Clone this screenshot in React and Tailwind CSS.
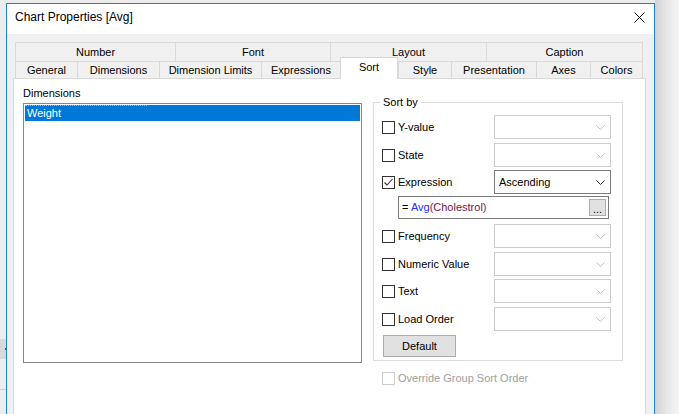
import React from 'react';

const topTabs = [
  { label: 'Number', w: 'w-[160px]' },
  { label: 'Font', w: 'w-[155px]' },
  { label: 'Layout', w: 'w-[156px]' },
  { label: 'Caption', w: 'w-[157px]' },
];

const bottomTabs = [
  { label: 'General', w: 'w-[62px]' },
  { label: 'Dimensions', w: 'w-[82px]' },
  { label: 'Dimension Limits', w: 'w-[102px]' },
  { label: 'Expressions', w: 'w-[79px]' },
  { label: 'Sort', w: 'w-[58px]', active: true },
  { label: 'Style', w: 'w-[53px]' },
  { label: 'Presentation', w: 'w-[85px]' },
  { label: 'Axes', w: 'w-[54px]' },
  { label: 'Colors', w: 'w-[53px]' },
];

function Chevron({ color }) {
  return (
    <svg width="9" height="5" viewBox="0 0 9 5">
      <polyline points="0.5,0.5 4.5,4.5 8.5,0.5" fill="none" stroke={color} strokeWidth="1" />
    </svg>
  );
}

function Dropdown({ value, enabled }) {
  return (
    <div
      className={`w-[117px] h-[24px] bg-white border flex items-center justify-between pl-[4px] pr-[5px] ${
        enabled ? 'border-[#7a7a7a]' : 'border-[#cccccc]'
      }`}
    >
      <span className="text-black">{value}</span>
      <Chevron color={enabled ? '#333333' : '#bfbfbf'} />
    </div>
  );
}

function CheckBox({ checked, disabled }) {
  return (
    <div
      className={`w-[13px] h-[13px] border bg-white flex items-center justify-center ${
        disabled ? 'border-[#cccccc]' : 'border-[#333333]'
      }`}
    >
      {checked && (
        <svg width="11" height="11" viewBox="0 0 11 11">
          <polyline points="1.5,5.5 4,8 9.5,2" fill="none" stroke="#333333" strokeWidth="1.1" />
        </svg>
      )}
    </div>
  );
}

function SortRow({ label, checked, value, enabled, className = '' }) {
  return (
    <div className={`h-[24px] flex items-center justify-between ${className}`}>
      <div className="flex items-center">
        <CheckBox checked={checked} />
        <span className="ml-[3px]">{label}</span>
      </div>
      <Dropdown value={value} enabled={enabled} />
    </div>
  );
}

export default function App() {
  return (
    <div className="w-[679px] h-[414px] overflow-hidden flex bg-[#ececec] text-[11px] leading-[13px] text-black font-['Liberation_Sans',Arial,sans-serif]">
      {/* Desktop behind, left edge */}
      <div className="w-[6px] flex flex-col">
        <div className="h-[339px]"></div>
        <div className="h-[20px] bg-[#d8d8d8] flex items-center justify-end">
          <div className="w-[1px] h-[2px] bg-[#555]"></div>
        </div>
        <div className="h-[30px]"></div>
        <div className="h-px bg-[#cfcfcf]"></div>
      </div>

      {/* Dialog window */}
      <div className="mt-[3px] w-[649px] border-t border-x border-[#1883d7] flex flex-col bg-[#f0f0f0]">
        {/* Title bar */}
        <div className="h-[30px] bg-white flex items-center justify-between pl-[8px] pr-[9px] pb-[3px]">
          <span className="text-[12px]">Chart Properties [Avg]</span>
          <svg width="11" height="11" viewBox="0 0 11 11">
            <line x1="0.5" y1="0.5" x2="10.5" y2="10.5" stroke="#111" strokeWidth="1" />
            <line x1="10.5" y1="0.5" x2="0.5" y2="10.5" stroke="#111" strokeWidth="1" />
          </svg>
        </div>

        {/* Body */}
        <div className="flex-1 flex flex-col pt-[8px] pl-[6px]">
          {/* Tabs */}
          <div className="ml-[2px] w-[628px] flex h-[19px]">
            {topTabs.map((t, i) => (
              <div
                key={t.label}
                className={`${t.w} border-t border-l border-[#d9d9d9] flex items-center justify-center ${
                  i === topTabs.length - 1 ? 'border-r' : ''
                }`}
              >
                {t.label}
              </div>
            ))}
          </div>
          <div className="ml-[2px] w-[628px] flex items-end h-[17px]">
            {bottomTabs.map((t, i) =>
              t.active ? (
                <div
                  key={t.label}
                  className={`${t.w} relative z-10 h-[22px] -mb-px bg-white border-t border-x border-[#d9d9d9] flex justify-center pt-[3px]`}
                >
                  {t.label}
                </div>
              ) : (
                <div
                  key={t.label}
                  className={`${t.w} h-[17px] border-t border-l border-[#d9d9d9] flex items-center justify-center ${
                    i === bottomTabs.length - 1 ? 'border-r' : ''
                  }`}
                >
                  {t.label}
                </div>
              )
            )}
          </div>

          {/* Panel */}
          <div className="w-[633px] flex-1 bg-white border-t border-x border-[#d9d9d9] flex">
            {/* Dimensions list */}
            <div className="ml-[9px] pt-[8px] flex flex-col">
              <span>Dimensions</span>
              <div className="mt-[3px] w-[339px] h-[260px] border border-[#828790] p-[1px]">
                <div className="relative h-[16px] bg-[#0078d7] text-white pl-[2px] flex items-center">
                  <span className="absolute top-0 left-0 w-[122px] border-t border-dotted border-[#f5a35c]"></span>
                  Weight
                </div>
              </div>
            </div>

            {/* Sort by */}
            <div className="ml-[11px] pt-[17px] flex flex-col">
              <fieldset className="w-[250px] border border-[#dcdcdc]">
                <legend className="ml-[6px] px-[3px]">Sort by</legend>
                <div className="pt-[6px] pl-[8px] pr-[11px] pb-[3px] flex flex-col">
                  <SortRow label="Y-value" />
                  <SortRow label="State" className="mt-[4px]" />
                  <SortRow label="Expression" checked value="Ascending" enabled className="mt-[3px]" />
                  <div className="mt-[2px] ml-[16px] w-[211px] h-[23px] border border-[#7a7a7a] flex items-center justify-between pl-[3px] pr-[2px]">
                    <span>
                      = <span className="text-[#2b2bff]">Avg</span>
                      <span className="text-[#7a1846]">(Cholestrol)</span>
                    </span>
                    <div className="w-[17px] h-[17px] bg-[#e1e1e1] border border-[#adadad] flex items-end justify-center pb-[3px] leading-[6px]">
                      ...
                    </div>
                  </div>
                  <SortRow label="Frequency" className="mt-[5px]" />
                  <SortRow label="Numeric Value" className="mt-[4px]" />
                  <SortRow label="Text" className="mt-[3px]" />
                  <SortRow label="Load Order" className="mt-[4px]" />
                  <button className="mt-[4px] ml-[1px] w-[73px] h-[22px] bg-[#e1e1e1] border border-[#adadad] flex items-center justify-center">
                    Default
                  </button>
                </div>
              </fieldset>
              <div className="mt-[11px] ml-[9px] flex items-center text-[#a0a0a0]">
                <CheckBox disabled />
                <span className="ml-[3px]">Override Group Sort Order</span>
              </div>
            </div>
          </div>
        </div>
      </div>

      {/* Window shadow */}
      <div className="w-[24px] bg-gradient-to-r from-[#d2d2d2] via-[#e8e8e8] to-[#f4f4f4]"></div>
    </div>
  );
}
